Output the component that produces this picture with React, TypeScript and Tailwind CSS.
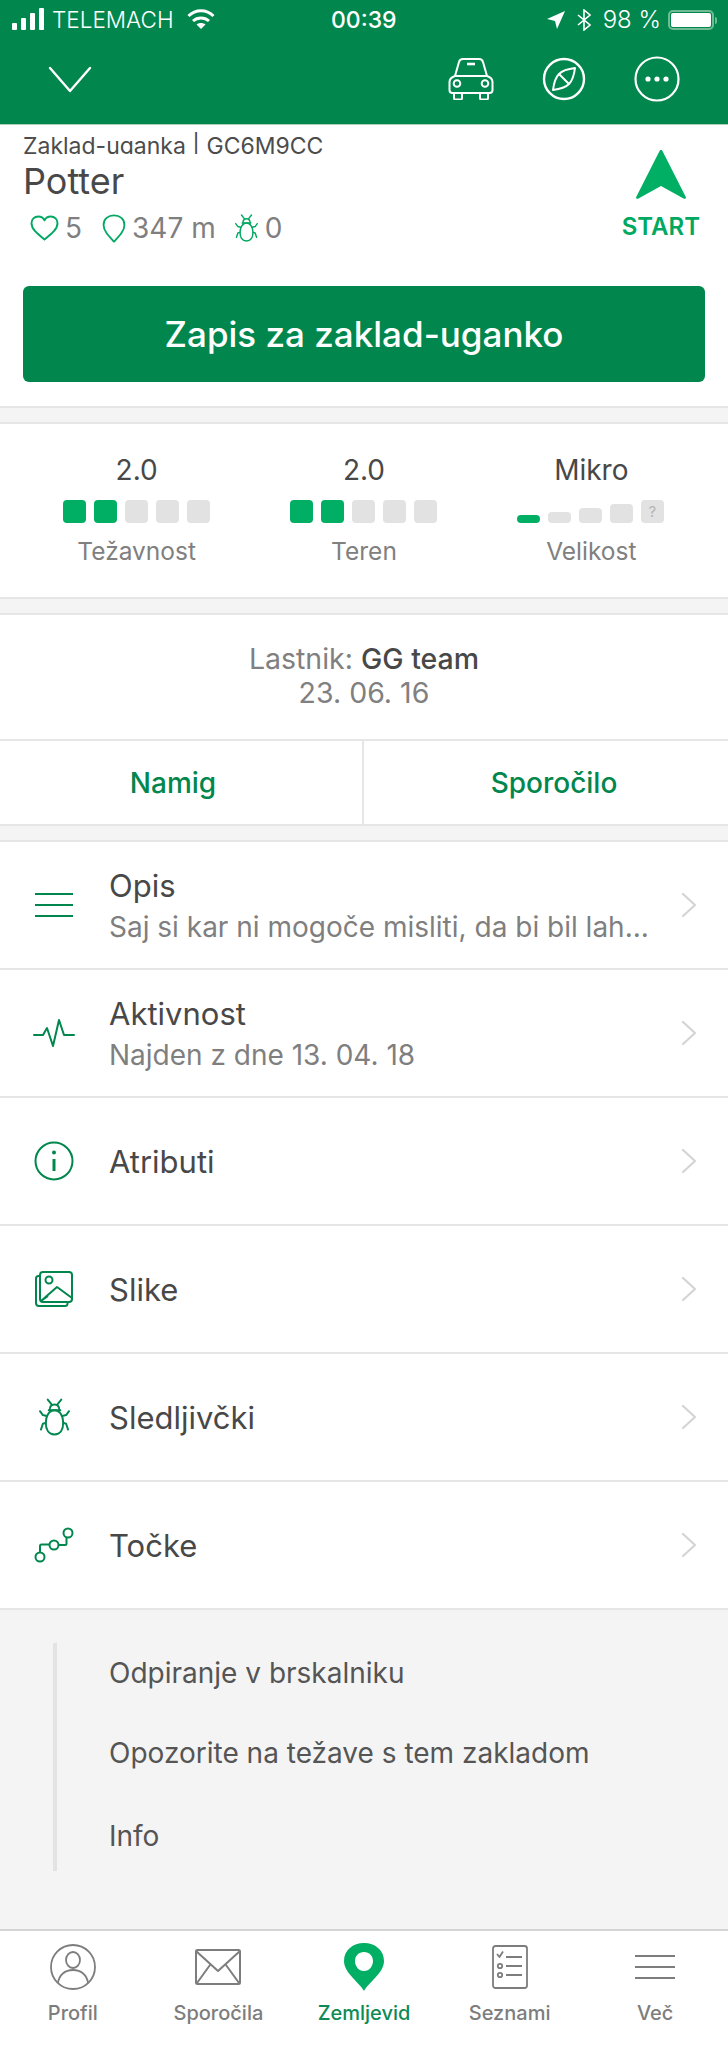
import type { ReactNode } from "react";

const green = "#01874d";

function Bug({ className, color }: { className: string; color: string }) {
  return (
    <svg viewBox="0 0 32 38" fill="none" stroke={color} strokeWidth="2" strokeLinecap="round" strokeLinejoin="round" className={className}>
      <path d="M9 1l4 5M23 1l-4 5" />
      <path d="M11 12c0-4 2-6 5-6s5 2 5 6" />
      <path d="M10 12h12" />
      <path d="M16 37c-6 0-9-5-9-12 0-6 3-13 9-13s9 7 9 13c0 7-3 12-9 12z" />
      <path d="M1 13l3 4 4 1M31 13l-3 4-4 1" />
      <path d="M2 32l2-6 3-1M30 32l-2-6-3-1" />
    </svg>
  );
}

function Chevron() {
  return (
    <svg viewBox="0 0 16 26" fill="none" stroke="#d4d4d4" strokeWidth="2.2" strokeLinecap="round" strokeLinejoin="round" className="w-[16px] h-[26px]">
      <path d="M2 2l12 11L2 24" />
    </svg>
  );
}

function Row({ icon, title, sub }: { icon: ReactNode; title: string; sub?: string }) {
  return (
    <div className="h-[128px] flex items-center border-b-[2px] border-[#e6e6e6] bg-white">
      <div className="w-[110px] flex justify-center pr-[2px] shrink-0">{icon}</div>
      <div className="flex-1 min-w-0 -ml-[1px]">
        <p className="text-[31px] leading-[40px] text-[#484848] pt-[1px]">{title}</p>
        {sub && <p className="text-[28px] leading-[36px] text-[#7f7f7f] mt-[3px] whitespace-nowrap">{sub}</p>}
      </div>
      <div className="pr-[31px]">
        <Chevron />
      </div>
    </div>
  );
}

function Band() {
  return <div className="h-[18px] bg-[#f4f4f4] border-y-[2px] border-[#e6e6e6]" />;
}

function Bars({ on }: { on: number }) {
  return (
    <div className="flex justify-center gap-[8px] mt-[12px]">
      {[0, 1, 2, 3, 4].map((i) => (
        <div key={i} className={`w-[23px] h-[23px] rounded-[4px] ${i < on ? "bg-[#00af64]" : "bg-[#e2e2e2]"}`} />
      ))}
    </div>
  );
}

function SizeBars() {
  return (
    <div className="flex justify-center items-end gap-[8px] mt-[12px] h-[23px] -ml-[2px]">
      <div className="w-[23px] h-[8px] rounded-[4px] bg-[#00af64]" />
      <div className="w-[23px] h-[11px] rounded-[4px] bg-[#e2e2e2]" />
      <div className="w-[23px] h-[15px] rounded-[4px] bg-[#e2e2e2]" />
      <div className="w-[23px] h-[19px] rounded-[4px] bg-[#e2e2e2]" />
      <div className="w-[23px] h-[23px] rounded-[4px] bg-[#e2e2e2] flex items-center justify-center text-[15px] leading-none text-[#b5b5b5]">?</div>
    </div>
  );
}

function Stat({ value, label, children }: { value: string; label: string; children: ReactNode }) {
  return (
    <div className="text-center">
      <p className="text-[28px] leading-[36px] text-[#484848]">{value}</p>
      {children}
      <p className="text-[24.500px] leading-[34px] text-[#808080] mt-[11px]">{label}</p>
    </div>
  );
}

function Tab({ label, active, children }: { label: string; active?: boolean; children: ReactNode }) {
  return (
    <div className="flex flex-col items-center">
      <div className="h-[48px] flex items-center justify-center">{children}</div>
      <p className={`text-[20px] leading-[26px] mt-[9px] font-medium ${active ? "text-[#0d8a55]" : "text-[#7d7d7d]"}`}>{label}</p>
    </div>
  );
}

export default function App() {
  return (
    <div className="w-[728px] h-[2048px] overflow-hidden bg-white flex flex-col font-['Inter',sans-serif]">
      {/* header */}
      <div className="h-[125px] shrink-0 bg-[#01874d] border-b border-[#a9cdb9] text-white">
        <div className="h-[40px] relative flex items-center pl-[12px] pr-[11px] text-[22.500px] font-light">
          <svg viewBox="0 0 32 22" fill="white" className="w-[32px] h-[22px] mb-[2px]">
            <rect x="0" y="15" width="5" height="7" rx="1" />
            <rect x="9" y="10" width="5" height="12" rx="1" />
            <rect x="18" y="5" width="5" height="17" rx="1" />
            <rect x="27" y="0" width="5" height="22" rx="1" />
          </svg>
          <span className="ml-[8px] leading-none">TELEMACH</span>
          <svg viewBox="0 0 28 22" fill="none" stroke="white" strokeWidth="3" className="w-[28px] h-[22px] ml-[13px] mb-[2px]">
            <path d="M1.500 8c7-7 18-7 25 0" />
            <path d="M6 13c4.500-4 11.500-4 16 0" />
            <path d="M14 21l-4.500-4.500c2.500-2 6.500-2 9 0z" fill="white" stroke="none" />
          </svg>
          <span className="absolute left-[331px] font-medium text-[23px] leading-none">00:39</span>
          <div className="ml-auto flex items-center">
            <svg viewBox="0 0 18 18" fill="white" className="w-[18px] h-[18px]">
              <path d="M18 0L0 8l8 2 2 8z" />
            </svg>
            <svg viewBox="0 0 14 22" fill="none" stroke="white" strokeWidth="1.600" className="w-[14px] h-[22px] ml-[12px]">
              <path d="M1 6l12 10-6 5V1l6 5L1 16" />
            </svg>
            <span className="ml-[12px] leading-none text-[24px]">98 %</span>
            <div className="ml-[7px] w-[46px] h-[20px] border-[2px] border-[#6fbb94] rounded-[5px] p-[1px]">
              <div className="w-full h-full bg-white rounded-[2px]" />
            </div>
            <div className="ml-[1px] w-[2px] h-[7px] bg-[#6fbb94] rounded-r-[2px]" />
          </div>
        </div>
        <div className="h-[84px] relative flex items-center pl-[48px]">
          <svg viewBox="0 0 44 27" fill="none" stroke="white" strokeWidth="2.400" strokeLinecap="round" strokeLinejoin="round" className="w-[44px] h-[27px] mb-[6px]">
            <path d="M2 2l20 23L42 2" />
          </svg>
          <div className="ml-auto flex items-center pr-[48px]">
            <svg viewBox="0 0 46 42" fill="none" stroke="white" strokeWidth="2" strokeLinejoin="round" className="w-[46px] h-[42px] mb-[6px]">
              <path d="M7 18l4-14c.500-2 2-3 4-3h16c2 0 3.500 1 4 3l4 14" />
              <path d="M19 6h8" strokeWidth="2.600" />
              <path d="M7 18c-3 1-5.500 3-5.500 6v8c0 2 1 3 3 3h37c2 0 3-1 3-3v-8c0-3-2.500-5-5.500-6z" />
              <circle cx="9" cy="25.500" r="3.300" />
              <circle cx="37" cy="25.500" r="3.300" />
              <path d="M6 35v5c0 1 .500 1.500 1.500 1.500h5c1 0 1.500-.500 1.500-1.500v-5M32 35v5c0 1 .500 1.500 1.500 1.500h5c1 0 1.500-.500 1.500-1.500v-5" />
            </svg>
            <svg viewBox="0 0 44 44" fill="none" stroke="white" strokeWidth="2.400" strokeLinejoin="round" className="w-[44px] h-[44px] ml-[48px] mb-[6px]">
              <circle cx="22" cy="22" r="20" />
              <path d="M33 11C32 19 30 24 27 27S19 32 11 33C12 25 14 20 17 17S25 12 33 11z" strokeWidth="2" />
              <path d="M17 17l10 10" strokeWidth="2" />
            </svg>
            <svg viewBox="0 0 46 46" fill="none" className="w-[46px] h-[46px] ml-[48px] mb-[6px]">
              <circle cx="23" cy="23" r="21.500" stroke="white" strokeWidth="2.200" />
              <circle cx="14" cy="23" r="2.600" fill="white" />
              <circle cx="23" cy="23" r="2.600" fill="white" />
              <circle cx="32" cy="23" r="2.600" fill="white" />
            </svg>
          </div>
        </div>
      </div>

      {/* title */}
      <div className="h-[281px] shrink-0 px-[23px] relative">
        <div className="h-[29px] overflow-hidden text-[23px] leading-[42px] text-[#4c4c4c]">Zaklad-uganka | GC6M9CC</div>
        <p className="text-[36px] leading-[42px] text-[#484848] mt-[6px]">Potter</p>
        <div className="flex items-center mt-[8px] pl-[7px] text-[28px] leading-[36px] text-[#7f7f7f]">
          <svg viewBox="0 0 30 27" fill="none" stroke="#00a862" strokeWidth="2" strokeLinejoin="round" className="w-[29px] h-[26px]">
            <path d="M15 25.500C7 19 1.500 14.500 1.500 8.500 1.500 4.500 4.500 1.500 8.500 1.500c2.800 0 5.200 1.500 6.500 4 1.300-2.500 3.700-4 6.500-4 4 0 7 3 7 7 0 6-5.500 10.500-13.500 17z" />
          </svg>
          <span className="ml-[6px]">5</span>
          <svg viewBox="0 0 26 32" fill="none" stroke="#00a862" strokeWidth="2" strokeLinejoin="round" className="w-[24px] h-[29px] ml-[20px]">
            <path d="M13 30.500C7 24 1.500 18.500 1.500 12 1.500 5.500 6.500 1.500 13 1.500S24.500 5.500 24.500 12c0 6.500-5.500 12-11.500 18.500z" />
          </svg>
          <span className="ml-[6px]">347 m</span>
          <Bug className="w-[23px] h-[28px] ml-[19px]" color="#00a862" />
          <span className="ml-[7px]">0</span>
        </div>
        <div className="absolute right-[28px] top-[25px] flex flex-col items-center">
          <svg viewBox="0 0 50 50" fill="#00af64" className="w-[50px] h-[50px]">
            <path d="M25 0c.800 0 1.300.500 1.600 1.200L49.800 47c.500 1.200-.600 2.300-1.800 1.700L25 36 2 48.700C.800 49.300-.300 48.200.200 47L23.400 1.200C23.700.500 24.200 0 25 0z" />
          </svg>
          <span className="text-[24px] leading-[30px] font-semibold text-[#00a862] mt-[12px]">START</span>
        </div>
        <div className="mt-[40px] h-[96px] rounded-[6px] bg-[#01874d] flex items-center justify-center text-[35px] font-medium text-white">Zapis za zaklad-uganko</div>
      </div>

      <Band />

      {/* ratings */}
      <div className="h-[173px] shrink-0 px-[23px] pt-[28px] grid grid-cols-3">
        <Stat value="2.0" label="Težavnost">
          <Bars on={2} />
        </Stat>
        <Stat value="2.0" label="Teren">
          <Bars on={2} />
        </Stat>
        <Stat value="Mikro" label="Velikost">
          <SizeBars />
        </Stat>
      </div>

      <Band />

      {/* owner */}
      <div className="h-[124px] shrink-0 pt-[26px] text-center text-[#808080] text-[28.500px] leading-[36px]">
        <p>
          Lastnik: <span className="font-medium text-[#484848]">GG team</span>
        </p>
        <p className="mt-[-2px]">23. 06. 16</p>
      </div>
      <div className="h-[85px] shrink-0 border-t-[2px] border-[#e6e6e6] grid grid-cols-2 text-[28px] font-medium" style={{ color: green }}>
        <div className="flex items-center justify-center border-r-[2px] border-[#e6e6e6] pr-[16px]">Namig</div>
        <div className="flex items-center justify-center pl-[16px]">Sporočilo</div>
      </div>

      <Band />

      {/* list */}
      <Row
        title="Opis"
        sub="Saj si kar ni mogoče misliti, da bi bil lah..."
        icon={
          <svg viewBox="0 0 38 26" fill="none" stroke={green} strokeWidth="2" className="w-[38px] h-[26px]">
            <path d="M0 2h38M0 13h38M0 24h38" />
          </svg>
        }
      />
      <Row
        title="Aktivnost"
        sub="Najden z dne 13. 04. 18"
        icon={
          <svg viewBox="0 0 42 30" fill="none" stroke={green} strokeWidth="2" strokeLinejoin="round" strokeLinecap="round" className="w-[42px] h-[30px]">
            <path d="M1 17h9l4-7 6 18 6-26 5 15h10" />
          </svg>
        }
      />
      <Row
        title="Atributi"
        icon={
          <svg viewBox="0 0 40 40" fill="none" stroke={green} strokeWidth="2" className="w-[40px] h-[40px]">
            <circle cx="20" cy="20" r="18.500" />
            <path d="M20 18v12" strokeWidth="3" />
            <circle cx="20" cy="11.500" r="2" fill={green} stroke="none" />
          </svg>
        }
      />
      <Row
        title="Slike"
        icon={
          <svg viewBox="0 0 38 36" fill="none" stroke={green} strokeWidth="2" strokeLinejoin="round" className="w-[38px] h-[36px]">
            <rect x="5" y="1" width="32" height="30" rx="3" />
            <path d="M5 5H3.500C2 5 1 6 1 7.500V32c0 1.800 1.200 3 3 3h26c1.500 0 2.500-1 2.500-2.500V31" />
            <circle cx="14" cy="9" r="3.500" />
            <path d="M6 30l16-14 15 11M6 30l7-5" />
          </svg>
        }
      />
      <Row title="Sledljivčki" icon={<Bug className="w-[31px] h-[38px]" color={green} />} />
      <Row
        title="Točke"
        icon={
          <svg viewBox="0 0 40 36" fill="none" stroke={green} strokeWidth="2" className="w-[40px] h-[36px]">
            <circle cx="6" cy="30" r="4.500" />
            <circle cx="20" cy="18" r="4.500" />
            <circle cx="34" cy="6" r="4.500" />
            <path d="M6 25.500V19c0-1 .500-1.500 1.500-1.500h8M25 18h6c1 0 1.500-.500 1.500-1.500V10.500" />
          </svg>
        }
      />

      {/* links */}
      <div className="flex-1 bg-[#f4f4f4] pt-[33px] pl-[53px]">
        <div className="h-[228px] border-l-[4px] border-[#e3e3e3] pl-[52px] text-[28px] text-[#555555]">
          <div className="h-[80px] pt-[12px] leading-[36px]">Odpiranje v brskalniku</div>
          <div className="h-[82px] pt-[12px] leading-[36px]">Opozorite na težave s tem zakladom</div>
          <div className="pt-[13px] leading-[36px]">Info</div>
        </div>
      </div>

      {/* tab bar */}
      <div className="h-[119px] shrink-0 bg-white border-t-[2px] border-[#d4d4d4] pt-[12px] grid grid-cols-5">
        <Tab label="Profil">
          <svg viewBox="0 0 46 46" fill="none" stroke="#7d7d7d" strokeWidth="1.800" className="w-[46px] h-[46px]">
            <circle cx="23" cy="23" r="22" />
            <ellipse cx="23" cy="16" rx="7" ry="8" />
            <path d="M8 39c1-8 7-13 15-13s14 5 15 13" />
          </svg>
        </Tab>
        <Tab label="Sporočila">
          <svg viewBox="0 0 46 36" fill="none" stroke="#7d7d7d" strokeWidth="2" strokeLinejoin="round" className="w-[46px] h-[36px]">
            <rect x="1" y="1" width="44" height="34" rx="1.500" />
            <path d="M1 2l22 20L45 2M2 34l13-18M44 34L31 16" />
          </svg>
        </Tab>
        <Tab label="Zemljevid" active>
          <svg viewBox="0 0 40 48" className="w-[40px] h-[48px]">
            <path fill="#00af64" fillRule="evenodd" d="M20 48C16 40 0 30 0 18 0 7 9 0 20 0s20 7 20 18c0 12-16 22-20 30zM20 9c-5.500 0-9 4-9 9s3.500 10 9 10 9-5 9-10-3.500-9-9-9z" />
          </svg>
        </Tab>
        <Tab label="Seznami">
          <svg viewBox="0 0 36 44" fill="none" stroke="#7d7d7d" strokeWidth="1.800" strokeLinejoin="round" className="w-[36px] h-[44px]">
            <rect x="1" y="1" width="34" height="42" rx="2.500" />
            <path d="M5 9l2.500 3L11 6.500" />
            <path d="M14 12h16M14 21h16M14 30h16" strokeWidth="2.200" />
            <circle cx="8" cy="21" r="2.200" />
            <circle cx="8" cy="30" r="2.200" />
          </svg>
        </Tab>
        <Tab label="Več">
          <svg viewBox="0 0 40 26" fill="none" stroke="#7d7d7d" strokeWidth="2" className="w-[40px] h-[26px]">
            <path d="M0 2h40M0 13h40M0 24h40" />
          </svg>
        </Tab>
      </div>
    </div>
  );
}
